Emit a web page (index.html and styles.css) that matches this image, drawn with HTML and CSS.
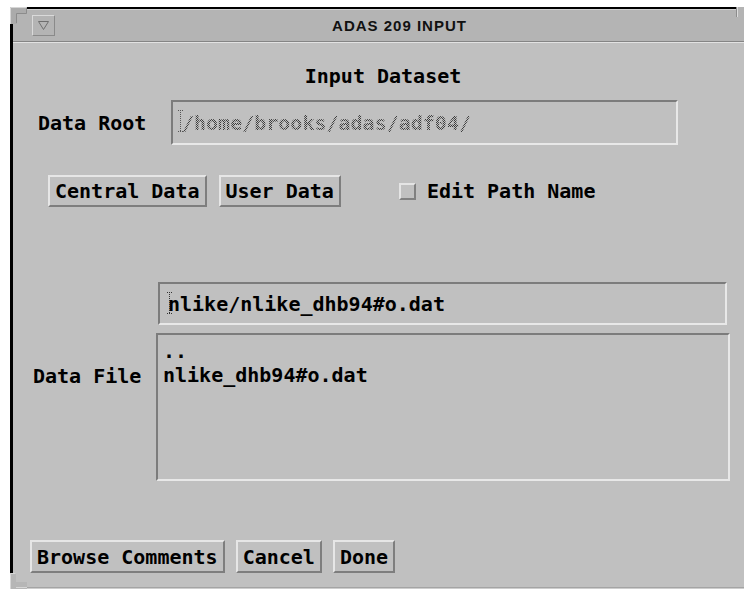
FILE: index.html
```html
<!DOCTYPE html>
<html>
<head>
<meta charset="utf-8">
<title>ADAS 209 INPUT</title>
<link rel="stylesheet" href="styles.css">
</head>
<body>
<div class="window">
  <svg class="corner corner-tl" width="17" height="17" viewBox="0 0 17 17">
    <path d="M0 0H17V7H7V17H0Z" fill="#ababab"/>
    <path d="M0.5 17V0.5H16.5" stroke="#d6d6d6" fill="none"/>
    <path d="M16.5 1V6.5H6.5V16" stroke="#8c8c8c" fill="none"/>
  </svg>
  <svg class="corner corner-tr" width="8" height="10" viewBox="0 0 8 10">
    <path d="M0 0H8V10H0Z" fill="#b4b4b4"/>
    <path d="M1.5 0V10" stroke="#dcdcdc"/>
    <path d="M0.5 0V10" stroke="#8c8c8c"/>
  </svg>
  <svg class="corner corner-bl" width="17" height="16" viewBox="0 0 17 16">
    <path d="M0 0H6V9H17V16H0Z" fill="#b6b6b6"/>
    <path d="M0.5 16V0.5H5.5" stroke="#d6d6d6" fill="none"/>
    <path d="M6 14.5H17" stroke="#d6d6d6"/>
  </svg>

  <div class="titlebar">
    <div class="menu-btn">
      <svg width="11" height="9" viewBox="0 0 11 9">
        <path d="M0.5 0.5H10.5L5.5 8.5Z" fill="none" stroke="#6e6e6e"/>
      </svg>
    </div>
    <div class="title">ADAS 209 INPUT</div>
  </div>

  <div class="panel">
    <div class="heading">Input Dataset</div>

    <div class="row root-row">
      <span class="label root-label">Data Root</span>
      <div class="entry root-entry">
        <svg class="caret" width="6" height="22" viewBox="0 0 6 22">
          <path d="M0 0.5H5M2.5 0V22M0 21.5H5" stroke="#555" stroke-dasharray="1 1" fill="none"/>
        </svg>
        <span class="stipple">/home/brooks/adas/adf04/</span>
      </div>
    </div>

    <div class="row source-row">
      <button class="btn">Central Data</button>
      <button class="btn">User Data</button>
      <span class="check"></span>
      <span class="check-label">Edit Path Name</span>
    </div>

    <div class="entry file-entry">
      <svg class="caret" width="6" height="22" viewBox="0 0 6 22">
        <path d="M0 0.5H5M2.5 0V22M0 21.5H5" stroke="#333" stroke-dasharray="1 1" fill="none"/>
      </svg>
      <span>nlike/nlike_dhb94#o.dat</span>
    </div>

    <div class="row file-row">
      <span class="label file-label">Data File</span>
      <div class="listbox">
        <div class="item">..</div>
        <div class="item">nlike_dhb94#o.dat</div>
      </div>
    </div>

    <div class="row actions">
      <button class="btn">Browse Comments</button>
      <button class="btn">Cancel</button>
      <button class="btn">Done</button>
    </div>
  </div>
</div>
</body>
</html>
```

FILE: styles.css
```css
html, body {
  margin: 0;
  height: 100%;
  background: #ffffff;
  overflow: hidden;
}

body {
  font-family: "DejaVu Sans Mono", "Liberation Mono", monospace;
  font-weight: bold;
  font-size: 20px;
  line-height: 24px;
  color: #000;
}

/* Window frame */
.window {
  position: relative;
  box-sizing: border-box;
  margin: 7px 0 0 10px;
  height: 582px;
  border-top: 2px solid #000;
  border-left: 3px solid #000;
  border-bottom: 1px solid #cdcdcd;
  background: #c0c0c0;
  display: flex;
  flex-direction: column;
}

.corner {
  position: absolute;
  display: block;
}
.corner-tl { top: -2px; left: -3px; }
.corner-tr { top: -2px; right: 0; }
.corner-bl { bottom: -1px; left: -3px; }

.titlebar {
  display: flex;
  align-items: flex-start;
  height: 31px;
  background: #b4b4b4;
  border-top: 1px solid #d2d2d2;
  border-bottom: 1px solid #858585;
}

.menu-btn {
  box-sizing: border-box;
  width: 23px;
  height: 21px;
  margin: 5px 0 0 19px;
  border: 1px solid;
  border-color: #dadada #8a8a8a #8a8a8a #dadada;
  display: flex;
  align-items: center;
  justify-content: center;
}
.menu-btn svg { display: block; }

.title {
  flex: 1;
  text-align: center;
  font-family: "Liberation Sans", Arial, sans-serif;
  font-size: 15px;
  font-weight: bold;
  letter-spacing: 1px;
  line-height: 31px;
  color: #111;
}

/* Main panel */
.panel {
  flex: 1;
  border-top: 1px solid #e2e2e2;
  border-bottom: 1px solid #a4a4a4;
  display: flex;
  flex-direction: column;
  align-items: flex-start;
}

.heading {
  align-self: stretch;
  margin-top: 21px;
  padding-left: 9px;
  text-align: center;
}

.row {
  display: flex;
  align-items: center;
}

.label { white-space: pre; }

.root-row { margin-top: 12px; }
.root-label {
  width: 133px;
  margin-left: 25px;
}

.entry {
  position: relative;
  box-sizing: border-box;
  display: flex;
  align-items: center;
  border: 2px solid;
  border-color: #7c7c7c #e8e8e8 #e8e8e8 #7c7c7c;
  background: #c0c0c0;
  white-space: pre;
}

.root-entry {
  width: 507px;
  height: 45px;
  padding-left: 9px;
}
.root-entry .caret { left: 5px; top: 8px; }

.caret {
  position: absolute;
  display: block;
}

/* Disabled text drawn with a stipple pattern */
.stipple {
  color: transparent;
  background: repeating-conic-gradient(#3c3c3c 0 25%, transparent 0 50%) 0 0 / 2px 2px;
  -webkit-background-clip: text;
  background-clip: text;
}

.source-row {
  margin-top: 30px;
  margin-left: 35px;
}
.source-row .btn + .btn { margin-left: 12px; }

.btn {
  box-sizing: border-box;
  height: 32px;
  margin: 0;
  padding: 2px 5px;
  font: inherit;
  line-height: 24px;
  color: #000;
  background: #c0c0c0;
  border: 2px solid;
  border-color: #e6e6e6 #7e7e7e #7e7e7e #e6e6e6;
  border-radius: 0;
  white-space: pre;
}

.check {
  box-sizing: border-box;
  width: 17px;
  height: 17px;
  margin-left: 58px;
  border: 2px solid;
  border-color: #e4e4e4 #808080 #808080 #e4e4e4;
  background: #c0c0c0;
}
.check-label {
  margin-left: 11px;
  white-space: pre;
}

.file-entry {
  margin-top: 75px;
  margin-left: 145px;
  width: 569px;
  height: 43px;
  padding-left: 8px;
}
.file-entry .caret { left: 7px; top: 8px; }

.file-row {
  margin-top: 8px;
  align-items: flex-start;
}
.file-label {
  width: 123px;
  margin-left: 20px;
  margin-top: 31px;
}

.listbox {
  box-sizing: border-box;
  width: 574px;
  height: 148px;
  padding: 4px 5px;
  border: 2px solid;
  border-color: #7c7c7c #e8e8e8 #e8e8e8 #7c7c7c;
}
.item { white-space: pre; }

.actions {
  margin-top: 59px;
  margin-left: 17px;
  gap: 11px;
}
.actions .btn { height: 33px; padding-top: 3px; }
```
